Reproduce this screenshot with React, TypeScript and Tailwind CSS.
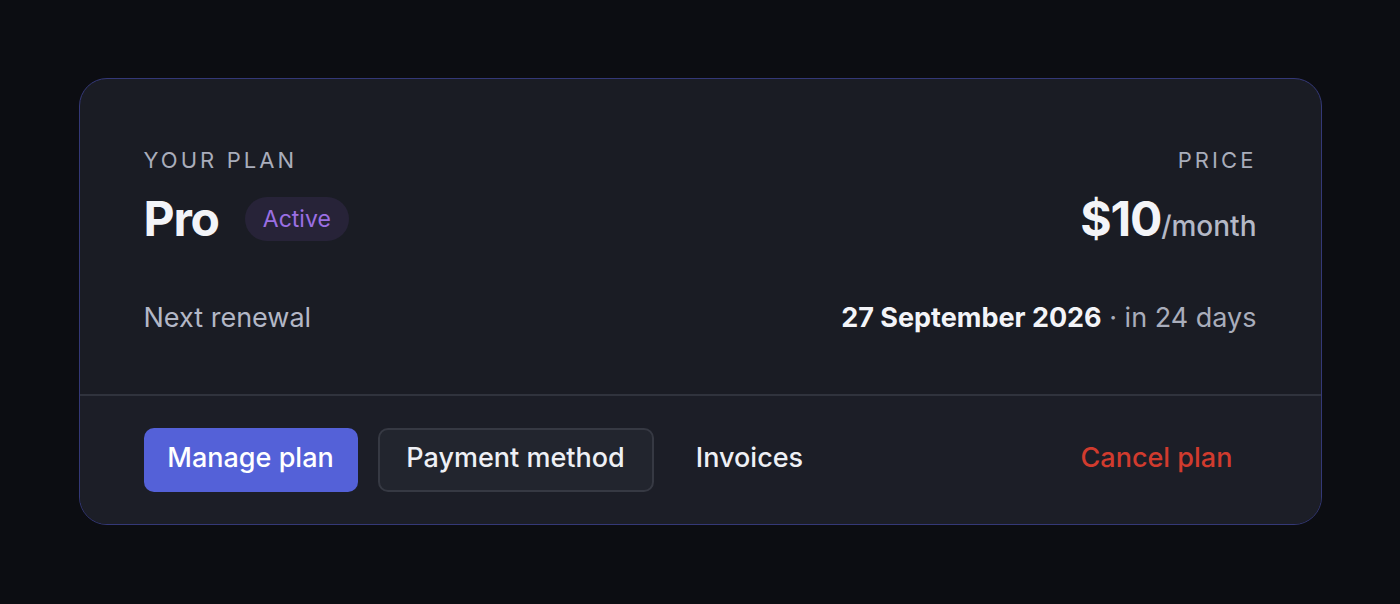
const font = { fontFamily: "Inter, 'Noto Sans', sans-serif" };

export default function App() {
  return (
    <main
      className="flex h-[604px] w-full items-start justify-center bg-[#0c0d12] pt-[78px]"
      style={font}
    >
      <section className="w-[1243px] overflow-hidden rounded-[28px] border border-[#343877] bg-[#1a1c24]">
        <div className="px-16 pt-[66px] pb-[58px]">
          <div className="flex items-start justify-between">
            <div>
              <p className="text-[22px] leading-[30px] tracking-[0.14em] text-[#a9adbb]">
                YOUR PLAN
              </p>
              <div className="mt-[20px] flex items-center gap-[26px]">
                <h1 className="text-[48px] leading-[48px] font-bold tracking-tight text-[#f3f4f8]">
                  Pro
                </h1>
                <span className="flex h-[44px] items-center rounded-full bg-[#272338] px-[18px] text-[23px] text-[#9b6fe3]">
                  Active
                </span>
              </div>
            </div>
            <div className="text-right">
              <p className="text-[22px] leading-[30px] tracking-[0.14em] text-[#a9adbb]">
                PRICE
              </p>
              <p className="mt-[20px] leading-[48px] text-[#f3f4f8]">
                <span className="text-[48px] font-bold tracking-tight">$10</span>
                <span className="text-[28px] font-medium text-[#b4b8c6]">/month</span>
              </p>
            </div>
          </div>
          <div className="mt-[46px] flex items-center justify-between text-[27px] leading-[36px]">
            <span className="text-[#b3b7c6]">Next renewal</span>
            <span className="text-[#a9adbb]">
              <span className="font-bold text-[#f3f4f8]">27 September 2026</span> · in 24 days
            </span>
          </div>
        </div>
        <div className="flex items-center justify-between border-t-2 border-[#30333d] bg-[#1c1e27] px-16 py-8">
          <div className="flex items-center gap-5">
            <button className="h-16 w-[214px] rounded-[10px] bg-[#5461d8] pb-1 text-[27px] font-medium text-white">
              Manage plan
            </button>
            <button className="h-16 w-[276px] rounded-[10px] border-2 border-[#363943] bg-[#22252e] pb-1 text-[27px] font-medium text-[#eef0f5]">
              Payment method
            </button>
            <button className="h-16 w-[152px] rounded-[10px] pb-1 text-[27px] font-medium text-[#eef0f5]">
              Invoices
            </button>
          </div>
          <button className="h-16 w-[196px] rounded-[10px] pr-1 pb-1 text-[27px] font-medium text-[#d13b2e]">
            Cancel plan
          </button>
        </div>
      </section>
    </main>
  );
}
